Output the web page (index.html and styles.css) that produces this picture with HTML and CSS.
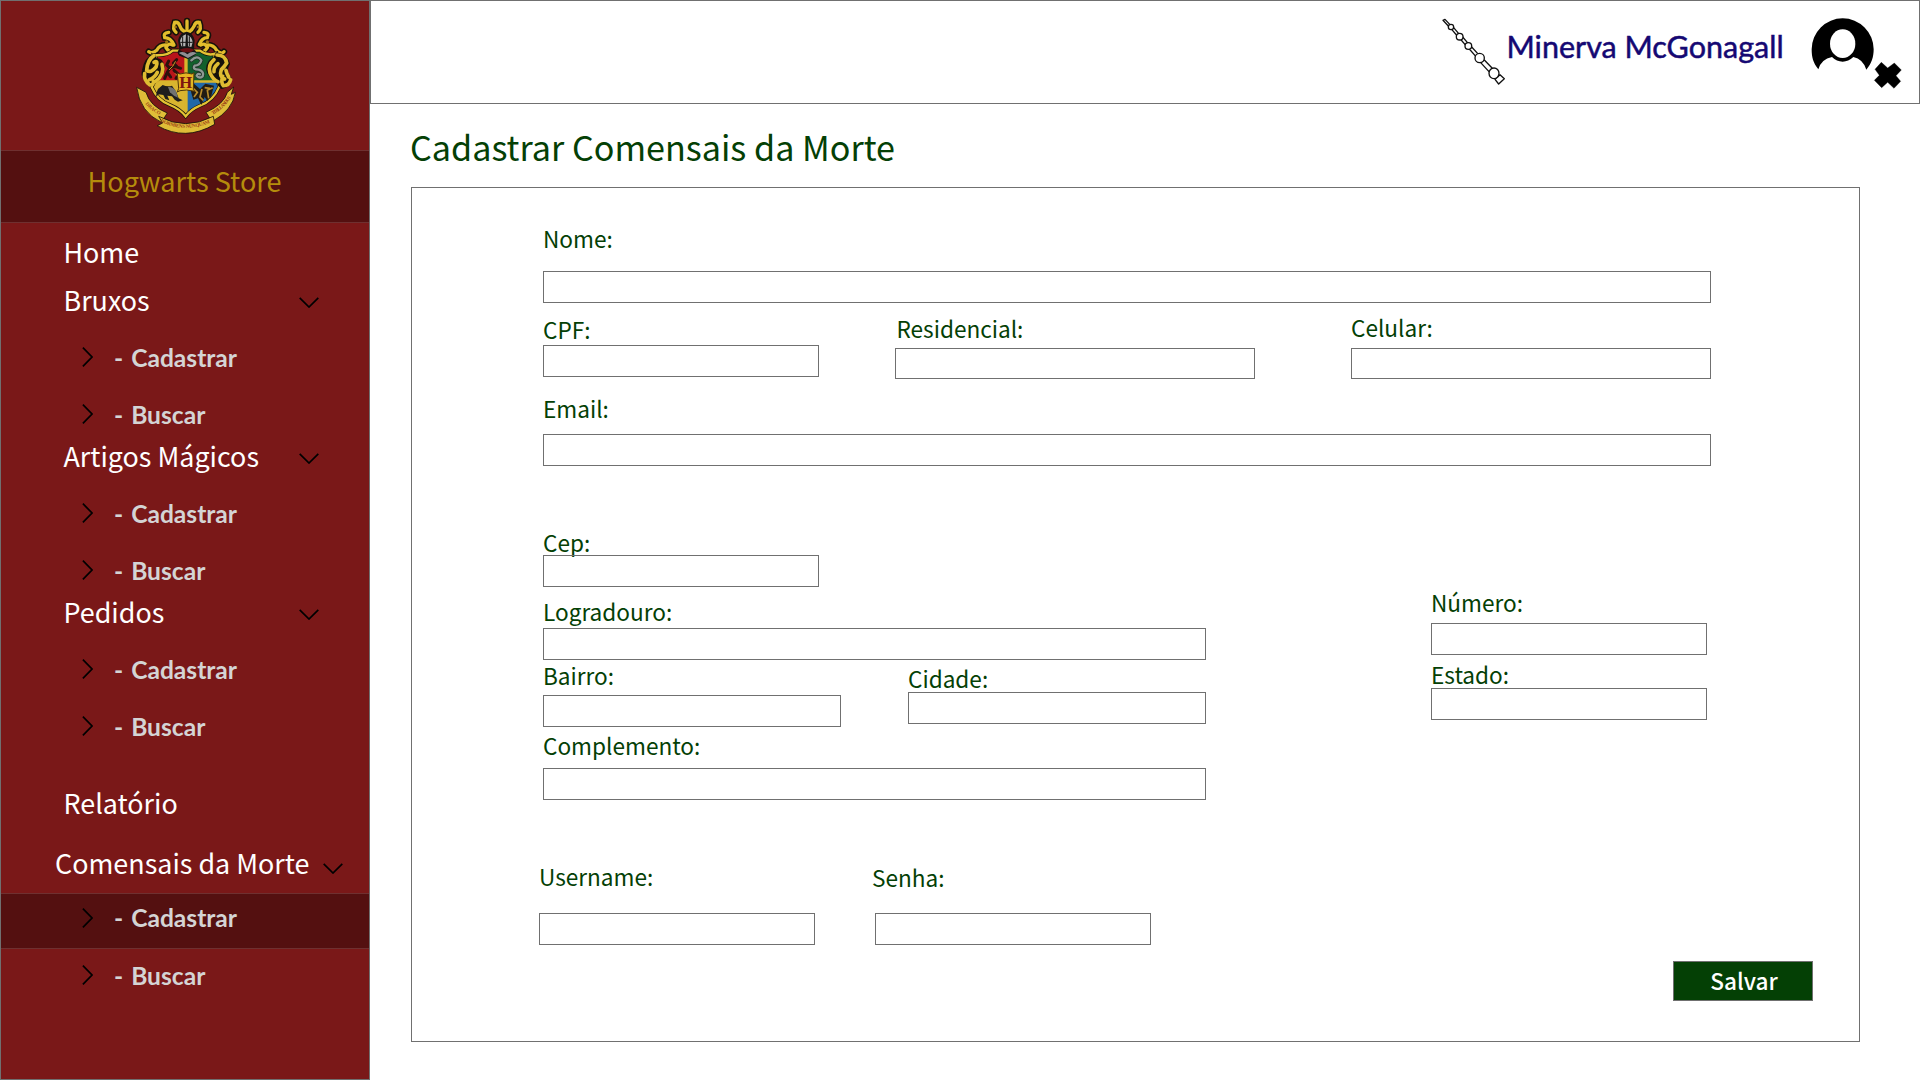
FILE: index.html
```html
<!DOCTYPE html>
<html lang="pt-BR">
<head>
<meta charset="utf-8">
<title>Hogwarts Store - Cadastrar Comensais da Morte</title>
<link rel="stylesheet" href="styles.css">
</head>
<body>
<svg class="defs" aria-hidden="true">
  <symbol id="down" viewBox="0 0 20 11"><path d="M.7 .9 10 10 19.3 .9" fill="none" stroke="#000" stroke-width="1.7"/></symbol>
  <symbol id="right" viewBox="0 0 11 20"><path d="M.9 .7 10 10 .9 19.3" fill="none" stroke="#000" stroke-width="1.7"/></symbol>
</svg>
<div class="app">
  <aside class="sidebar">
    <div class="logo">
      <svg class="crest" viewBox="0 0 390 405" aria-label="Hogwarts">
        <defs>
          <path id="motto-left" d="M76 296Q94 320 132 336"/>
          <path id="motto-mid" d="M121 350Q195 386 274 352"/>
          <path id="motto-right" d="M278 329Q315 310 336 272"/>
          <clipPath id="shield"><path d="M103 150Q140 154 158 137L240 137Q262 154 286 146Q274 180 298 245Q280 288 240 302Q212 314 197 334Q180 312 150 300Q112 286 95 246Q128 190 103 150Z"/></clipPath>
        </defs>
        <!-- helmet mantling -->
        <g fill="none" stroke="#16120a" stroke-width="19" stroke-linecap="round">
          <path d="M172 140Q148 146 138 128Q144 112 158 120M162 120Q152 98 134 98Q128 84 146 82M140 120Q120 118 110 136Q96 148 86 140"/>
          <path d="M224 140Q250 148 262 128Q256 112 242 120M238 118Q246 98 262 98Q270 84 252 82M260 120Q280 118 290 136Q304 150 312 140"/>
          <path d="M168 82Q156 72 164 52Q176 50 180 64Q184 76 194 80M234 82Q246 72 238 52Q226 50 222 64Q216 76 208 80M201 78V48"/>
        </g>
        <g fill="none" stroke="#e2bd2c" stroke-width="10" stroke-linecap="round">
          <path d="M172 140Q148 146 138 128Q144 112 158 120M162 120Q152 98 134 98Q128 84 146 82M140 120Q120 118 110 136Q96 148 86 140"/>
          <path d="M224 140Q250 148 262 128Q256 112 242 120M238 118Q246 98 262 98Q270 84 252 82M260 120Q280 118 290 136Q304 150 312 140"/>
          <path d="M168 82Q156 72 164 52Q176 50 180 64Q184 76 194 80M234 82Q246 72 238 52Q226 50 222 64Q216 76 208 80M201 78V48"/>
        </g>
        <g fill="#9a7412"><circle cx="140" cy="111" r="5"/><circle cx="262" cy="111" r="5"/><circle cx="167" cy="66" r="4"/><circle cx="234" cy="66" r="4"/></g>
        <!-- shield -->
        <g clip-path="url(#shield)">
          <path fill="#b9151b" d="M80 120H198V232H80Z"/>
          <path fill="#12602c" d="M198 120H320V232H198Z"/>
          <path fill="#d9b52f" d="M80 228H198V340H80Z"/>
          <path fill="#2168a8" d="M198 228H320V340H198Z"/>
          <path fill="#d8b52c" d="M193 120H203V345H193ZM80 226H320V233H80Z"/>
        </g>
        <path fill="none" stroke="#16120a" stroke-width="11" d="M103 150Q140 154 158 137L240 137Q262 154 286 146Q274 180 298 245Q280 288 240 302Q212 314 197 334Q180 312 150 300Q112 286 95 246Q128 190 103 150Z"/>
        <path fill="none" stroke="#e5c233" stroke-width="7" d="M103 150Q140 154 158 137L240 137Q262 154 286 146Q274 180 298 245Q280 288 240 302Q212 314 197 334Q180 312 150 300Q112 286 95 246Q128 190 103 150Z"/>
        <!-- helmet -->
        <path fill="#151313" d="M174 106Q178 84 200 80Q220 84 224 106L222 134Q232 138 226 150L204 162L178 152Q168 142 178 132Z"/>
        <path fill="#b5b5b5" d="M180 108Q184 92 198 88L196 124L184 124ZM203 90Q216 96 218 112L214 126L204 124Z"/>
        <path fill="none" stroke="#151313" stroke-width="3" d="M188 94V124M208 94V124M181 112H218"/>
        <path fill="#6b1014" d="M178 134Q200 124 224 134L212 142H190Z"/>
        <path fill="#8f8f94" d="M176 144Q190 136 202 148Q216 136 230 145L204 159Z"/>
        <!-- side scrolls -->
        <g fill="#16120a" stroke="#16120a" stroke-width="8">
          <path d="M102 150Q76 160 70 196Q64 216 84 232Q94 246 102 234Q132 214 130 186Q126 160 108 164Z"/>
          <path d="M290 146Q318 150 326 176Q312 196 332 222Q326 244 306 248Q296 240 292 230Q266 216 262 192Q264 166 284 160Z"/>
        </g>
        <g fill="none" stroke="#dfbc32" stroke-width="11" stroke-linecap="round">
          <path d="M102 152Q82 164 80 196Q92 206 108 186Q116 164 102 172M126 178Q136 206 106 230M74 206Q70 226 90 240Q102 240 100 228M88 224Q104 218 112 202"/>
          <path d="M291 150Q316 150 320 174Q314 184 304 194Q296 216 314 222M282 164Q262 182 270 204Q280 226 294 230M294 176Q280 188 282 200M332 224Q328 242 310 242Q302 232 308 214M326 216Q320 206 318 196"/>
        </g>
        <!-- lion -->
        <path fill="none" stroke="#2b120d" stroke-width="9" stroke-linejoin="round" stroke-linecap="round" d="M170 164L160 174L170 184L150 188L142 202L152 216M164 184L182 190M162 196L176 208L168 220M150 190L140 180L146 168M140 206L134 220"/>
        <path fill="none" stroke="#c69a24" stroke-width="3" stroke-linecap="round" d="M166 170L158 184L148 194M166 206L176 216"/>
        <!-- snake -->
        <path fill="none" stroke="#1f2e26" stroke-width="11" stroke-linecap="round" d="M214 166Q232 148 244 166Q240 182 224 182Q216 194 236 194Q254 200 248 214Q238 222 230 212Q232 204 240 208"/>
        <path fill="none" stroke="#8d9a94" stroke-width="7" stroke-linecap="round" d="M214 166Q232 148 244 166Q240 182 224 182Q216 194 236 194Q254 200 248 214Q238 222 230 212Q232 204 240 208"/>
        <!-- badger -->
        <path fill="#1e1d1d" d="M114 252L128 240Q142 246 156 242Q170 258 176 280L188 286L174 290L164 284L156 274L142 272L148 286L136 282L130 270L116 268L108 276L110 262Z"/>
        <path fill="#717171" d="M144 246Q158 244 168 258L174 278L162 272L150 262Z"/>
        <!-- eagle -->
        <path fill="#211c14" d="M210 242L222 236L240 252L256 236L282 242L274 272L262 288L254 276L244 300L234 280L220 284L214 264Z"/>
        <path fill="none" stroke="#b98d2b" stroke-width="5" d="M216 246L232 262L222 276M278 248L262 256L266 280M246 252L240 276L250 286M254 248L270 250"/>
        <!-- H plate -->
        <path fill="#e6b522" stroke="#4e3508" stroke-width="3" d="M172 204L180 207Q198 200 216 207L222 203L220 253L224 259Q198 252 180 257L172 261L176 250Z"/>
        <text class="crest-h" x="197" y="248" text-anchor="middle">H</text>
        <!-- motto ribbon -->
        <g fill="#dfbd38" stroke="#16120a" stroke-width="2.5" stroke-linejoin="round">
          <path d="M50 247L78 262Q90 304 142 324L124 352Q60 322 50 247Z"/>
          <path d="M341 246L322 262Q312 298 258 322L276 350Q338 316 346 262L334 268Z"/>
          <path d="M116 334Q196 378 280 334L284 358Q196 410 112 362L128 354Z"/>
        </g>
        <g class="motto">
          <text><textPath href="#motto-left">DRACO</textPath></text>
          <text><textPath href="#motto-mid" textLength="154">DORMIENS NUNQUAM</textPath></text>
          <text><textPath href="#motto-right" textLength="76">TITILLANDUS</textPath></text>
        </g>
      </svg>
    </div>
    <div class="brand">Hogwarts Store</div>
    <nav class="menu">
      <a class="item">Home</a>
      <a class="item item-next">Bruxos<svg class="down"><use href="#down"/></svg></a>
      <div class="sub">
        <a class="subitem"><svg class="right"><use href="#right"/></svg>- Cadastrar</a>
        <a class="subitem"><svg class="right"><use href="#right"/></svg>- Buscar</a>
      </div>
      <a class="item">Artigos Mágicos<svg class="down"><use href="#down"/></svg></a>
      <div class="sub">
        <a class="subitem"><svg class="right"><use href="#right"/></svg>- Cadastrar</a>
        <a class="subitem"><svg class="right"><use href="#right"/></svg>- Buscar</a>
      </div>
      <a class="item">Pedidos<svg class="down"><use href="#down"/></svg></a>
      <div class="sub">
        <a class="subitem"><svg class="right"><use href="#right"/></svg>- Cadastrar</a>
        <a class="subitem"><svg class="right"><use href="#right"/></svg>- Buscar</a>
      </div>
      <a class="item item-report">Relatório</a>
      <a class="item item-wide">Comensais da Morte<svg class="down"><use href="#down"/></svg></a>
      <a class="subitem subitem-active"><svg class="right"><use href="#right"/></svg>- Cadastrar</a>
      <a class="subitem subitem-last"><svg class="right"><use href="#right"/></svg>- Buscar</a>
    </nav>
  </aside>
  <div class="content">
    <header class="topbar">
      <svg class="wand" viewBox="66 54 192 204">
        <g fill="#fff" stroke="#111" stroke-width="4" stroke-linejoin="round">
          <path d="M69 61L75 58L92 76L87 80Z"/>
          <path d="M95 88L101 83L118 103L112 108Z"/>
          <path d="M121 117L128 111L145 131L138 137Z"/>
          <path d="M148 147L155 141L176 164L168 170Z"/>
          <path d="M182 188L193 180L219 207L207 215Z"/>
          <path d="M225 238L240 224L253 236L236 252Z"/>
          <circle cx="93" cy="81" r="8"/><circle cx="119" cy="110" r="10"/><circle cx="145" cy="138" r="10"/><circle cx="179" cy="174" r="14"/><ellipse cx="222" cy="220" rx="15" ry="16"/>
        </g>
      </svg>
      <span class="user">Minerva McGonagall</span>
      <svg class="avatar" viewBox="1174 50 273 216">
        <path d="M1196 207C1180 187 1176 170 1176 147A93 93 0 0 1 1362 147C1362 170 1356 190 1340 208Q1330 176 1301 170Q1286 184 1269 184Q1251 184 1237 170Q1205 176 1196 207Z"/>
        <ellipse cx="1269" cy="130" rx="38" ry="43" fill="#fff"/>
        <path d="M1385 186L1404 203L1424 188L1445 209L1429 226L1443 243L1423 264L1404 246L1386 262L1364 240L1379 225L1366 207Z" stroke="#000" stroke-width="1" stroke-linejoin="round"/>
      </svg>
    </header>
    <main class="main">
      <h1 class="title">Cadastrar Comensais da Morte</h1>
      <form class="panel">
        <div class="row"><label class="field field-full gap-20">Nome:<input></label></div>
        <div class="row row-doc">
          <label class="field field-short drop-2 gap-3">CPF:<input></label>
          <label class="field field-phone field-res drop-1 gap-7">Residencial:<input class="low"></label>
          <label class="field field-phone field-cel gap-8">Celular:<input class="low"></label>
        </div>
        <div class="row row-email"><label class="field field-full gap-13">Email:<input></label></div>
        <div class="address">
          <div class="street">
            <label class="field field-short">Cep:<input></label>
            <label class="field log gap-4">Logradouro:<input></label>
            <div class="row row-city">
              <label class="field field-half gap-7">Bairro:<input></label>
              <label class="field field-half city drop-3 gap-1">Cidade:<input></label>
            </div>
            <label class="field comp gap-10">Complemento:<input></label>
          </div>
          <div class="state">
            <label class="field field-short gap-8">Número:<input></label>
            <label class="field field-short uf gap-1">Estado:<input></label>
          </div>
        </div>
        <div class="row row-login">
          <label class="field field-short gap-24">Username:<input></label>
          <label class="field field-short senha drop-1 gap-23">Senha:<input></label>
        </div>
        <button class="save" type="button">Salvar</button>
      </form>
    </main>
  </div>
</div>
</body>
</html>
```
FILE: styles.css
```css
* { box-sizing: border-box; }

body {
  margin: 0;
  background: #fff;
  font-family: "Noto Sans CJK SC", "Noto Sans", sans-serif;
}

.defs { display: none; }

.app { display: flex; width: 1920px; height: 1080px; overflow: hidden; }

/* Sidebar */
.sidebar {
  flex: none;
  width: 370px;
  border: 1px solid #707070;
  background: #7a1818;
}

.logo { height: 149px; padding: 4px 0 0 119px; }
.crest { display: block; width: 130px; height: 135px; }
.crest-h { font: bold 50px "Liberation Serif", serif; fill: #7d1510; }
.motto { font: bold 15px "Liberation Serif", serif; fill: #9c3f16; }

.brand {
  height: 73px;
  padding-left: 86.5px;
  border: 1px solid #6f3030;
  border-width: 1px 0;
  background: #541010;
  color: #b58c0c;
  font-size: 27.1px;
  line-height: 60px;
}

.menu { padding-top: 9px; }

.item {
  display: flex;
  align-items: center;
  justify-content: space-between;
  height: 40px;
  padding: 0 50px 0 62.5px;
  color: #fff;
  font-size: 26.9px;
  line-height: 40px;
}
.item-next { margin-top: 8px; }
.item-report { margin-top: 36px; }
.item-wide { margin-top: 20px; padding: 0 26px 0 54px; }
.down { width: 20px; height: 11px; margin-top: 5px; }
.item-wide .down { margin-top: 10px; }

.sub { display: flex; flex-direction: column; gap: 23px; padding: 20px 0 5px; }
.sub:last-of-type { padding-bottom: 4px; }

.subitem {
  display: flex;
  align-items: center;
  gap: 21.5px;
  height: 34px;
  padding-left: 80.5px;
  color: #d4d4d4;
  font: bold 24.6px Lato, sans-serif;
  word-spacing: 2px;
}
.right { width: 11px; height: 20px; }
.subitem-active {
  height: 56px;
  margin-top: 10px;
  padding-bottom: 7px;
  border: 1px solid #6f3030;
  border-width: 1px 0;
  background: #541010;
}
.subitem-last { margin-top: 9px; }

/* Header */
.content { flex: 1; }

.topbar {
  display: flex;
  height: 104px;
  padding-left: 1071px;
  border: 1px solid #707070;
}
.wand { flex: none; width: 64px; height: 68px; margin-top: 17px; }
.user {
  flex: none;
  width: 305px;
  padding-left: .5px;
  color: #150873;
  font: 30.5px/91px Lato, sans-serif;
  -webkit-text-stroke: .5px #150873;
}
.avatar { flex: none; width: 91px; height: 72px; margin-top: 16px; }

/* Form */
.main { padding-left: 41px; color: #044005; }

.title {
  height: 83px;
  margin: 0 0 0 -1px;
  font-size: 34.15px;
  font-weight: 400;
  line-height: 84px;
}

.panel {
  width: 1449px;
  height: 855px;
  padding: 39px 0 0 131px;
  border: 1px solid #707070;
}

.row { display: flex; align-items: flex-start; }

.field {
  display: flex;
  flex-direction: column;
  flex: none;
  font-size: 22.6px;
  line-height: 24px;
}
.field input {
  width: 100%;
  height: 32px;
  padding: 0 8px;
  border: 1px solid #707070;
  border-radius: 0;
  background: transparent;
  outline: 0;
}
.field input.low { height: 31px; }

.field-full { width: 1168px; }
.field-short { width: 276px; }
.field-phone { width: 360px; }
.field-half { width: 298px; }
.field-res { margin-left: 76px; text-indent: 1.5px; }
.field-cel { margin-left: 96px; }

.drop-1 { margin-top: 1px; }
.drop-2 { margin-top: 2px; }
.drop-3 { margin-top: 3px; }
.gap-1 { gap: 1px; }
.gap-3 { gap: 3px; }
.gap-4 { gap: 4px; }
.gap-7 { gap: 7px; }
.gap-8 { gap: 8px; }
.gap-10 { gap: 10px; }
.gap-13 { gap: 13px; }
.gap-20 { gap: 20px; }
.gap-23 { gap: 23px; }
.gap-24 { gap: 24px; }

.row-doc { margin-top: 13px; }
.row-email { margin-top: 18px; }

.address { display: flex; gap: 225px; margin-top: 65px; }
.street { width: 663px; }
.log { margin-top: 13px; }
.row-city { margin-top: 4px; }
.city { margin-left: 67px; }
.comp { margin-top: 7px; }
.state { padding-top: 60px; }
.uf { margin-top: 8px; }

.row-login { margin: 65px 0 0 -4px; }
.senha { margin-left: 60px; text-indent: -3px; }

.save {
  display: block;
  width: 140px;
  height: 40px;
  margin: 16px 0 0 1130px;
  padding: 0;
  border: 1px solid #707070;
  background: #044005;
  color: #fff;
  font: 500 22.6px/38px "Noto Sans CJK SC", sans-serif;
  text-indent: 2px;
}
```
